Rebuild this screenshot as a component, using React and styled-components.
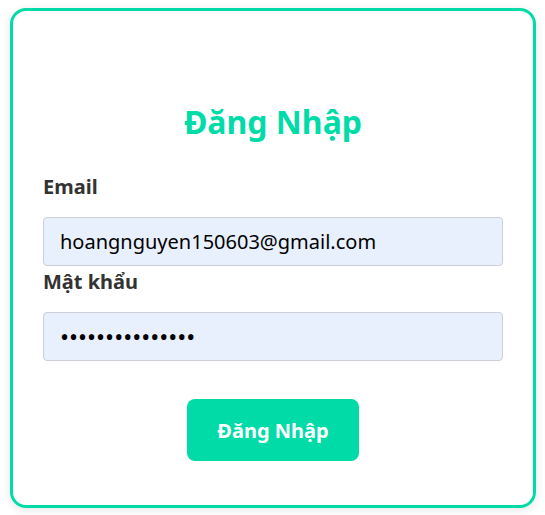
import React, { useState } from 'react'
import styled, { createGlobalStyle } from 'styled-components'

const GlobalStyle = createGlobalStyle`
  * { box-sizing: border-box; }
  body {
    margin: 0;
    background: #fff;
    font-family: "Noto Sans", "Open Sans", sans-serif;
  }
`

const Page = styled.div`
  padding: 8px 9px 7px 10px;
`

const Card = styled.form`
  width: 526px;
  height: 500px;
  border: 3px solid #00dba8;
  border-radius: 16px;
  box-shadow: 0 2px 10px rgba(0, 0, 0, 0.1);
  padding: 89px 30px 30px;
  display: flex;
  flex-direction: column;
`

const Title = styled.h2`
  margin: 0 0 29px;
  text-align: center;
  color: #00dba8;
  font-size: 32px;
  font-weight: 700;
  line-height: 44px;
`

const Label = styled.label`
  display: block;
  font-size: 20px;
  font-weight: 700;
  color: #333;
  line-height: 28px;
  margin-top: ${(p) => p.$top || 0}px;
  margin-bottom: 16px;
`

const Input = styled.input`
  width: 100%;
  height: 49px;
  padding: 0 16px;
  border: 1px solid #ccd0d6;
  border-radius: 4px;
  background: #e8f0fe;
  font-family: inherit;
  font-size: ${(p) => (p.type === 'password' ? 24 : 20)}px;
  color: #000;
  outline: none;
`

const Actions = styled.div`
  display: flex;
  justify-content: center;
  margin-top: 38px;
`

const Button = styled.button`
  width: 172px;
  height: 62px;
  border: none;
  border-radius: 8px;
  background: #00dba8;
  color: #fff;
  font-family: inherit;
  font-size: 20px;
  font-weight: 700;
  cursor: pointer;
`

export default function App() {
  const [email, setEmail] = useState('hoangnguyen150603@gmail.com')
  const [password, setPassword] = useState('123456789012345')

  return (
    <Page>
      <GlobalStyle />
      <Card onSubmit={(e) => e.preventDefault()}>
        <Title>Đăng Nhập</Title>
        <Label htmlFor="email">Email</Label>
        <Input id="email" type="email" value={email} onChange={(e) => setEmail(e.target.value)} />
        <Label htmlFor="password" $top={2}>Mật khẩu</Label>
        <Input id="password" type="password" value={password} onChange={(e) => setPassword(e.target.value)} />
        <Actions>
          <Button type="submit">Đăng Nhập</Button>
        </Actions>
      </Card>
    </Page>
  )
}
